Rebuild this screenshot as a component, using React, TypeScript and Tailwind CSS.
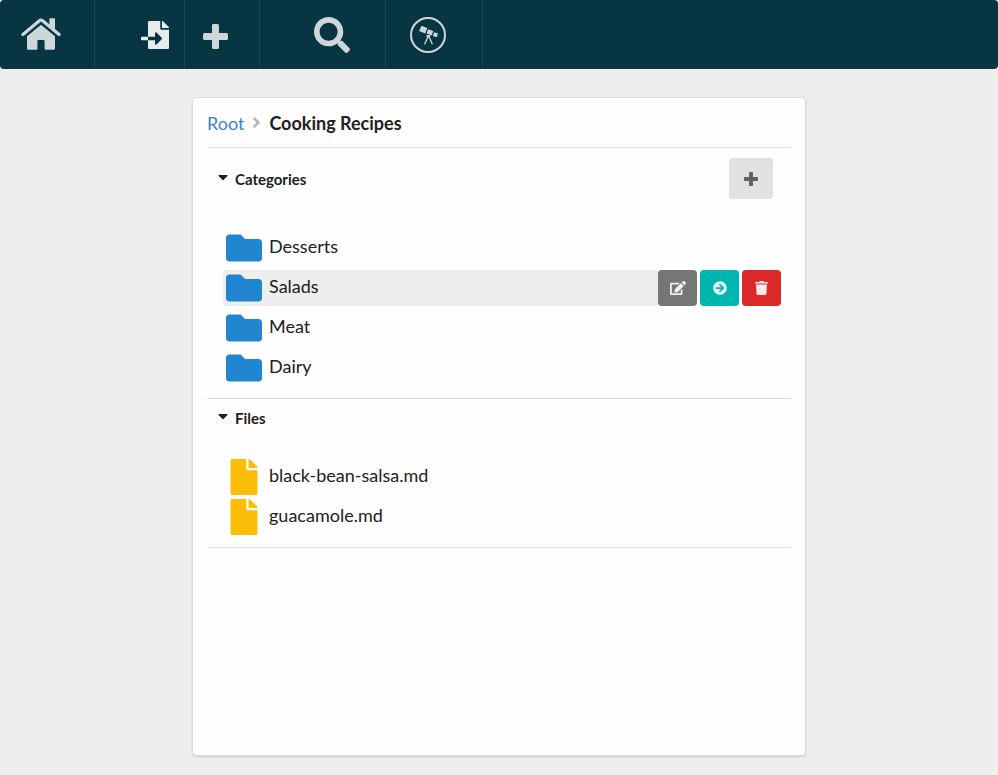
import { useState } from "react";
import type { ReactNode } from "react";
import {
  FaAngleRight,
  FaArrowCircleRight,
  FaCaretDown,
  FaEdit,
  FaFile,
  FaFileImport,
  FaFolder,
  FaSearch,
} from "react-icons/fa";

function HomeIcon() {
  return (
    <svg width="40" height="34" viewBox="0 0 40 34" fill="currentColor" aria-hidden="true">
      <path
        d="M1.9 16.6 18.7 2.6Q20 1.6 21.3 2.6L38.1 16.6"
        fill="none"
        stroke="currentColor"
        strokeWidth="3.2"
        strokeLinecap="round"
        strokeLinejoin="round"
      />
      <path d="M28.4 1Q28.4 .3 29.2 .3H33.2Q34 .3 34 1V12.5L28.4 7.8Z" />
      <path d="M20 6.8 34 18.3V30.4Q34 31.8 32.6 31.8H24.6Q23.6 31.8 23.6 30.8V23.2Q23.6 22 22.5 22H17.5Q16.4 22 16.4 23.2V30.8Q16.4 31.8 15.4 31.8H7.4Q6 31.8 6 30.4V18.3Z" />
    </svg>
  );
}

function PlusIcon({ size }: { size: number }) {
  return (
    <svg width={size} height={size} viewBox="0 0 25 25" fill="currentColor" aria-hidden="true">
      <rect x="9" y="0" width="7" height="25" rx="1.5" />
      <rect x="0" y="9" width="25" height="7" rx="1.5" />
    </svg>
  );
}

function TelescopeIcon() {
  return (
    <svg width="36" height="36" viewBox="0 0 36 36" fill="currentColor" aria-hidden="true">
      <circle cx="18" cy="18" r="17" fill="none" stroke="currentColor" strokeWidth="2" />
      <path d="M11.4 8.7 17.3 11 15.3 16.4 9.1 14Z" />
      <path d="M18.2 12.3 23.3 14.1 21.7 18.4 16.5 16.6Z" />
      <path d="M24.2 15.3 28 16.5 26.8 20.3 22.8 19Z" />
      <path d="M18.3 19.4 14.5 27.2M18.9 19.4 22.4 27.2" fill="none" stroke="currentColor" strokeWidth="1.3" />
      <rect x="16.5" y="18" width="3.6" height="2" />
    </svg>
  );
}

function TrashIcon() {
  return (
    <svg width="13" height="14" viewBox="0 0 13 14" fill="currentColor" aria-hidden="true">
      <path d="M.5 .9H4L4.5 .2Q4.7 0 5 0H8Q8.3 0 8.5 .2L9 .9H12.5Q13 .9 13 1.4V2.1Q13 2.6 12.5 2.6H.5Q0 2.6 0 2.1V1.4Q0 .9 .5 .9Z" />
      <path d="M1 3.5H12L11.4 12.8Q11.3 14 10.1 14H2.9Q1.7 14 1.6 12.8Z" />
    </svg>
  );
}

function NavItem({ label, className, children }: { label: string; className: string; children: ReactNode }) {
  return (
    <button
      type="button"
      aria-label={label}
      className={`flex shrink-0 items-center border-r border-[#1c4651] ${className}`}
    >
      {children}
    </button>
  );
}

function SectionToggle({ title, open, onToggle }: { title: string; open: boolean; onToggle: () => void }) {
  return (
    <button
      type="button"
      aria-expanded={open}
      onClick={onToggle}
      className="flex items-start gap-1 text-[15px] leading-5 font-bold"
    >
      <FaCaretDown size={16} className={open ? "" : "-rotate-90"} />
      {title}
    </button>
  );
}

function Row({ name, icon, actions }: { name: string; icon: ReactNode; actions?: boolean }) {
  return (
    <li className={`flex h-9 items-center ${actions ? "bg-[#eeeeee]" : ""}`}>
      <a href="#" className="flex min-w-0 flex-1 items-center pl-[3px]">
        <span className="mr-[7px] flex w-9 justify-center">{icon}</span>
        <span className="truncate pb-1 text-[18px] leading-6">{name}</span>
      </a>
      {actions && (
        <div className="flex h-full gap-[3px] bg-[#fefefe] text-[#ffffffe6]">
          <button type="button" aria-label="Rename" className="flex w-[39px] items-center justify-center rounded bg-[#767676]">
            <FaEdit size={16} />
          </button>
          <button type="button" aria-label="Move" className="flex w-[39px] items-center justify-center rounded bg-[#00b5ad]">
            <FaArrowCircleRight size={14} />
          </button>
          <button type="button" aria-label="Delete" className="flex w-[39px] items-center justify-center rounded bg-[#db2828]">
            <TrashIcon />
          </button>
        </div>
      )}
    </li>
  );
}

const categories = ["Desserts", "Salads", "Meat", "Dairy"];
const files = ["black-bean-salsa.md", "guacamole.md"];

export default function App() {
  const [categoriesOpen, setCategoriesOpen] = useState(true);
  const [filesOpen, setFilesOpen] = useState(true);

  return (
    <div className="flex min-h-screen flex-col border-b border-[#d4d4d5] bg-[#eeeeee] font-['Lato',sans-serif] text-[#1f2021]">
      <nav aria-label="Main" className="flex h-[69px] rounded bg-[#073642]">
        <NavItem label="Home" className="pr-[33px] pl-[21px] text-[#cdd7d9]">
          <HomeIcon />
        </NavItem>
        <NavItem label="Import file" className="pr-[15px] pl-[46px] text-[#e6ebec]">
          <FaFileImport size={28} />
        </NavItem>
        <NavItem label="New" className="pt-1 pr-[31px] pl-[18px] text-[#cdd7d9]">
          <PlusIcon size={25} />
        </NavItem>
        <NavItem label="Search" className="pr-[35px] pl-[54px] text-[#cdd7d9]">
          <FaSearch size={36} />
        </NavItem>
        <NavItem label="Explore" className="pr-9 pl-6 text-[#cdd7d9]">
          <TelescopeIcon />
        </NavItem>
      </nav>

      <main className="flex flex-1 justify-center pt-7 pb-[19px]">
        <div className="w-full max-w-[614px] rounded border border-[#dcdddd] bg-[#fefefe] px-3.5 shadow-[0_1px_2px_0_rgba(34,36,38,0.15)]">
          <nav aria-label="Breadcrumb" className="flex h-[50px] items-center border-b border-[#dcdddd] text-[18px] leading-6">
            <a href="#" className="text-[#4183c4]">Root</a>
            <FaAngleRight size={17} className="mx-1 text-[#b5b5b5]" />
            <span className="font-bold">Cooking Recipes</span>
          </nav>

          <section className="border-b border-[#dcdddd] pt-2.5 pr-2.5 pb-3 pl-2">
            <div className="flex h-[41px] items-center justify-between pr-2">
              <SectionToggle title="Categories" open={categoriesOpen} onToggle={() => setCategoriesOpen(!categoriesOpen)} />
              <button
                type="button"
                aria-label="Add category"
                className="flex h-[41px] w-11 items-center justify-center rounded bg-[#e0e1e2] text-[#606162]"
              >
                <PlusIcon size={14} />
              </button>
            </div>
            {categoriesOpen && (
              <ul className="mt-[31px] space-y-1 pl-2">
                {categories.map((name) => (
                  <Row
                    key={name}
                    name={name}
                    actions={name === "Salads"}
                    icon={<FaFolder size={36} className="text-[#2185d0]" />}
                  />
                ))}
              </ul>
            )}
          </section>

          <section className="border-b border-[#dcdddd] pt-[9px] pr-2.5 pb-3 pl-2">
            <SectionToggle title="Files" open={filesOpen} onToggle={() => setFilesOpen(!filesOpen)} />
            {filesOpen && (
              <ul className="mt-[31px] space-y-1 pl-2">
                {files.map((name) => (
                  <Row key={name} name={name} icon={<FaFile size={36} className="text-[#fbbd08]" />} />
                ))}
              </ul>
            )}
          </section>
        </div>
      </main>
    </div>
  );
}
